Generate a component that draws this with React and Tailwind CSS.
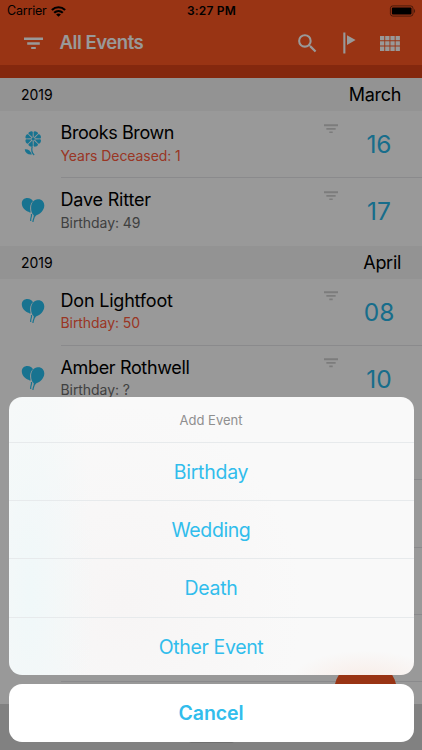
import React from 'react';
import { MdSearch } from 'react-icons/md';

const sections = [
  {
    year: '2019',
    month: 'March',
    events: [
      { name: 'Brooks Brown', nameSpacing: 'tracking-[-0.4px]', detail: 'Years Deceased: 1', day: '16', icon: 'flower', highlight: true },
      { name: 'Dave Ritter', nameSpacing: 'tracking-[-0.2px]', detail: 'Birthday: 49', day: '17', icon: 'balloons' },
    ],
  },
  {
    year: '2019',
    month: 'April',
    events: [
      { name: 'Don Lightfoot', nameSpacing: 'tracking-[-0.2px]', detail: 'Birthday: 50', day: '08', icon: 'balloons', highlight: true },
      { name: 'Amber Rothwell', nameSpacing: 'tracking-[-0.35px]', detail: 'Birthday: ?', day: '10', icon: 'balloons' },
    ],
  },
];

const actions = [
  { label: 'Birthday', spacing: 'tracking-[-0.25px]' },
  { label: 'Wedding', spacing: 'tracking-[-0.4px]' },
  { label: 'Death', spacing: 'tracking-[-0.25px]' },
  { label: 'Other Event', spacing: 'tracking-[-0.35px]' },
];

const Balloons = () => (
  <svg width="24" height="26" viewBox="0 0 24 26" fill="#29c0f0">
    <path d="M6.4 1C9.2 1 11.2 2.4 12 4.2C9.4 6.4 8.6 9.8 9.4 14L9.7 15.6H8.4L8.2 14.9C4 13.6 0.8 10.1 0.8 6.4C0.8 3.2 3.1 1 6.4 1Z" />
    <path d="M16.8 2.3C20.6 2 23.3 4.8 23.3 8.6C23.3 13 19.3 17.6 15 18.4L14.5 19.4H12.6L12.8 18.2C10.9 16.7 10.1 14.2 10.1 11C10.1 6 12.8 2.6 16.8 2.3Z" />
    <path d="M10.5 17C11 19.8 9.2 21 9.7 24M13.5 18.8C13.2 21 12.2 22 11.9 25" fill="none" stroke="#29c0f0" strokeWidth="1.2" />
  </svg>
);

const petals = [22.5, 67.5, 112.5, 157.5, 202.5, 247.5, 292.5, 337.5];

const Flower = () => (
  <svg width="24" height="26" viewBox="0 0 24 26" fill="#29c0f0">
    {petals.map((angle) => (
      <path key={angle} d="M12.2 7.4L9.9 2.4C9.6 0.3 14.8 0.3 14.5 2.4Z" transform={`rotate(${angle} 12.2 8.9)`} />
    ))}
    <circle cx="12.2" cy="8.9" r="1.6" />
    <path d="M11.2 16.4C10.3 20 11 23.2 13.2 25" fill="none" stroke="#29c0f0" strokeWidth="1.2" />
    <path d="M3.7 19.4C7 19 9.6 20.8 10.9 24.5C7.3 25.1 4.4 23.2 3.7 19.4Z" />
  </svg>
);

const FilterLines = ({ className, width }) => (
  <svg className={className} width={width} height={width * 0.684} viewBox="0 0 19 13" fill="currentColor">
    <path d="M0 0.5H19V2.9H0ZM3.2 5.3H15.8V7.7H3.2ZM7.2 10.1H11.8V12.5H7.2Z" />
  </svg>
);

const StatusBar = () => (
  <div className="flex h-[21px] items-center justify-between pl-[7px] pr-[6px] text-black">
    <div className="flex w-32 items-center gap-[4px] pt-px">
      <span className="text-[12.5px] tracking-[-0.2px]">Carrier</span>
      <svg width="15" height="11" viewBox="0 0 15 11" fill="none" stroke="black" strokeWidth="2.2">
        <path d="M0.9 4C4.7 0.3 10.3 0.3 14.1 4" />
        <path d="M3.2 6.8C5.7 4.4 9.3 4.4 11.8 6.8" />
        <path d="M7.5 10.8L5.1 8.5C6.5 7.2 8.5 7.2 9.9 8.5Z" fill="black" stroke="none" />
      </svg>
    </div>
    <span className="pt-px text-[12px] font-semibold tracking-[0.2px]">3:27 PM</span>
    <div className="flex w-32 justify-end">
      <svg width="27" height="12" viewBox="0 0 27 12">
        <rect x="1.4" y="0.9" width="22.6" height="10.2" rx="2.4" fill="none" stroke="black" strokeOpacity="0.5" />
        <rect x="2.9" y="2.4" width="19.6" height="7.2" rx="1" fill="black" />
        <path d="M25 4V8C26.5 7.4 26.5 4.6 25 4Z" fillOpacity="0.5" />
      </svg>
    </div>
  </div>
);

const Toolbar = () => (
  <div className="flex h-[44px] items-center pl-[23.5px] text-white">
    <FilterLines width={19} />
    <h1 className="ml-[17px] flex-1 whitespace-nowrap text-[18.5px] font-semibold tracking-[-0.45px]">All Events</h1>
    <div className="flex items-center pr-[22px]">
      <MdSearch size={25} />
      <svg className="ml-[22.5px]" width="13" height="22" viewBox="0 0 13 22" fill="currentColor">
        <path d="M0.3 0.5H2.4V21.5H0.3ZM4 3.3L12.6 8L4 12.9Z" />
      </svg>
      <svg className="ml-[24.5px]" width="20" height="15" viewBox="0 0 20 15" fill="currentColor">
        <path d="M0 0H4.3V4.3H0ZM5.2 0H9.5V4.3H5.2ZM10.4 0H14.7V4.3H10.4ZM15.6 0H19.9V4.3H15.6ZM0 5.3H4.3V9.6H0ZM5.2 5.3H9.5V9.6H5.2ZM10.4 5.3H14.7V9.6H10.4ZM15.6 5.3H19.9V9.6H15.6ZM0 10.6H4.3V14.9H0ZM5.2 10.6H9.5V14.9H5.2ZM10.4 10.6H14.7V14.9H10.4ZM15.6 10.6H19.9V14.9H15.6Z" />
      </svg>
    </div>
  </div>
);

const EventRow = ({ event }) => (
  <div className="group flex h-[67.2px] shrink-0">
    <div className="flex w-[60.5px] items-start pl-[21px] pt-[19px]">
      {event.icon === 'flower' ? <Flower /> : <Balloons />}
    </div>
    <div className="flex flex-1 border-b border-[#e6e6e9] group-last:border-transparent">
      <div className="flex-1 pt-[9px]">
        <p className={`whitespace-nowrap text-[18px] leading-[26px] text-black ${event.nameSpacing}`}>{event.name}</p>
        <p className={`mt-[-1.5px] whitespace-nowrap text-[14px] leading-[22px] tracking-[-0.07px] ${event.highlight ? 'text-[#ff5a3c]' : 'text-[#6c6c6c]'}`}>
          {event.detail}
        </p>
      </div>
      <FilterLines className="mr-[3px] mt-[12.5px] text-[#cfcfcf]" width={14} />
      <span className="w-[81px] pt-[17px] pr-[5px] text-center text-[24.5px] leading-[33px] text-[#29b6e8]">{event.day}</span>
    </div>
  </div>
);

const ActionSheet = () => (
  <div className="absolute inset-0 flex flex-col justify-end bg-black/40 px-[8.5px] pb-[8.5px]">
    <div className="overflow-hidden rounded-[13px] bg-[#f9f9f9] bg-[radial-gradient(ellipse_75px_30px_at_88%_102%,#f8ece6,transparent),radial-gradient(ellipse_65px_300px_at_5%_70%,#f0f8f9,transparent),radial-gradient(ellipse_180px_200px_at_28%_75%,#f7f5f5,transparent)] text-center">
      <p className="flex h-[44.5px] items-center justify-center pt-[2px] text-[13px] tracking-[0.02px] text-[#8f8f8f]">Add Event</p>
      {actions.map(({ label, spacing }) => (
        <button key={label} className={`flex h-[58.35px] w-full items-center justify-center border-t border-[#e7eaec] pt-[2px] text-[19.5px] text-[#31bdec] ${spacing}`}>
          {label}
        </button>
      ))}
    </div>
    <button className="mt-[8.5px] flex h-[58px] shrink-0 items-center justify-center rounded-[13px] bg-white pt-[2px] text-[19.5px] font-semibold tracking-[-0.1px] text-[#31bdec]">
      Cancel
    </button>
  </div>
);

export default function App() {
  return (
    <div className="relative flex h-[750px] w-[422px] flex-col overflow-hidden bg-white font-[Inter,sans-serif]">
      <header className="h-[78px] shrink-0 border-b-[13px] border-[#dc4318] bg-[#ff5722]">
        <StatusBar />
        <Toolbar />
      </header>

      <main className="flex h-[626px] shrink-0 flex-col overflow-hidden">
        {sections.map((section) => (
          <section key={section.month} className="shrink-0">
            <div className="flex h-[33.2px] items-center justify-between bg-[#f5f5f5] pl-[21px] pr-[21px] text-black">
              <span className="text-[14px]">{section.year}</span>
              <span className="text-[18px] tracking-[-0.3px]">{section.month}</span>
            </div>
            <div>
              {section.events.map((event) => (
                <EventRow key={event.name} event={event} />
              ))}
            </div>
          </section>
        ))}
        {[1, 2, 3, 4].map((row) => (
          <div key={row} className="ml-[60.5px] h-[67.2px] shrink-0 border-b border-[#e6e6e9]" />
        ))}
      </main>

      <footer className="flex flex-1 justify-center bg-[#d8d8d8] pt-[34px]">
        <div className="h-[5px] w-[45px] rounded-full bg-[#bababa]" />
      </footer>

      <div className="absolute left-[333.5px] top-[660px] h-[63px] w-[63px] rounded-full bg-[#ff5722]" />
      <ActionSheet />
    </div>
  );
}
